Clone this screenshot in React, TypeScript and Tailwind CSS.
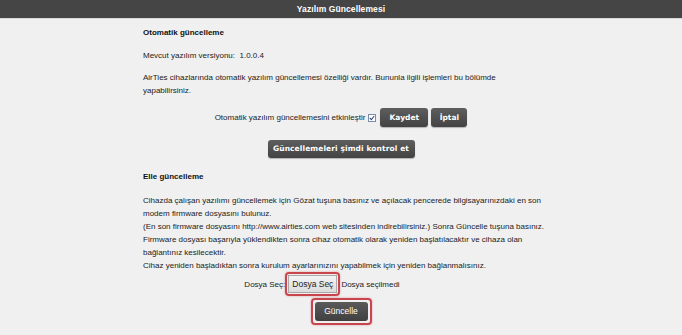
import React from "react";

const body = "font-['Liberation_Sans',Arial,sans-serif]";

function DarkBtn({ children, className = "" }: { children: React.ReactNode; className?: string }) {
  return (
    <button
      className={`rounded-[3px] bg-gradient-to-b from-[#5e5e5e] to-[#434343] text-white font-['DejaVu_Sans',Verdana,sans-serif] font-bold leading-none shadow-[0_1px_1px_rgba(0,0,0,0.25)] ${className}`}
    >
      {children}
    </button>
  );
}

export default function App() {
  return (
    <div className={`w-[682px] h-[335px] bg-[#f0f0f0] overflow-hidden ${body} text-[#222]`}>
      <div className="h-[19px] bg-[#454545] border-b border-[#d8d8d8] flex items-center justify-center">
        <span className="text-white font-bold text-[8.5px] tracking-[0.1px]">Yazılım Güncellemesi</span>
      </div>
      <div className="w-[420px] mx-auto pl-[12px] flex flex-col text-[8px] leading-[13px]">
        <div className="mt-[7px] font-bold text-[#111]">Otomatik güncelleme</div>
        <div className="mt-[10px]">Mevcut yazılım versiyonu: &nbsp;1.0.0.4</div>
        <div className="mt-[9px]">
          AirTies cihazlarında otomatik yazılım güncellemesi özelliği vardır. Bununla ilgili işlemleri bu bölümde
          <br />
          yapabilirsiniz.
        </div>
        <div className="mt-[11px] flex items-center justify-center gap-[3px] pr-[12px]">
          <span>Otomatik yazılım güncellemesini etkinleştir</span>
          <span className="w-[8px] h-[8px] border border-[#7a8ca8] bg-white flex items-center justify-center mr-[1px]">
            <svg width="6" height="6" viewBox="0 0 6 6">
              <path d="M0.8 3 L2.4 4.6 L5.2 1" stroke="#3a4f8a" strokeWidth="1.1" fill="none" />
            </svg>
          </span>
          <DarkBtn className="w-[48px] h-[19px] text-[7.5px]">Kaydet</DarkBtn>
          <DarkBtn className="w-[36px] h-[19px] text-[7.5px]">İptal</DarkBtn>
        </div>
        <div className="mt-[13px] flex justify-center pr-[12px]">
          <DarkBtn className="w-[147px] h-[18px] text-[7.5px] tracking-[0.1px]">Güncellemeleri şimdi kontrol et</DarkBtn>
        </div>
        <div className="mt-[12px] font-bold text-[#111]">Elle güncelleme</div>
        <div className="mt-[11px]">
          Cihazda çalışan yazılımı güncellemek için Gözat tuşuna basınız ve açılacak pencerede bilgisayarınızdaki en son modem firmware dosyasını bulunuz.
          <br />
          (En son firmware dosyasını http://www.airties.com web sitesinden indirebilirsiniz.) Sonra Güncelle tuşuna basınız.
          <br />
          Firmware dosyası başarıyla yüklendikten sonra cihaz otomatik olarak yeniden başlatılacaktır ve cihaza olan bağlantınız kesilecektir.
          <br />
          Cihaz yeniden başladıktan sonra kurulum ayarlarınızını yapabilmek için yeniden bağlanmalısınız.
        </div>
        <div className="mt-[0px] flex items-center justify-center pr-[50px]">
          <span>Dosya Seç:</span>
          <span className="rounded-[4px] border-2 border-[#c9454d] shadow-[0_0_2px_rgba(200,60,70,0.5)] p-[1px]">
            <span className="block h-[18px] px-[3px] border border-[#a8a8a8] bg-gradient-to-b from-[#f4f4f4] to-[#dcdcdc] text-[8.5px] leading-[16px] text-[#222]">
              Dosya Seç
            </span>
          </span>
          <span className="ml-[1px]">Dosya seçilmedi</span>
        </div>
        <div className="mt-[2px] flex justify-center pr-[12px]">
          <span className="rounded-[4px] border-2 border-[#c9454d] shadow-[0_0_2px_rgba(200,60,70,0.5)] p-[2px]">
            <button className="block w-[53px] h-[19px] rounded-[3px] bg-gradient-to-b from-[#5a5a5a] to-[#404040] text-white text-[8.5px] leading-none">
              Güncelle
            </button>
          </span>
        </div>
      </div>
    </div>
  );
}
